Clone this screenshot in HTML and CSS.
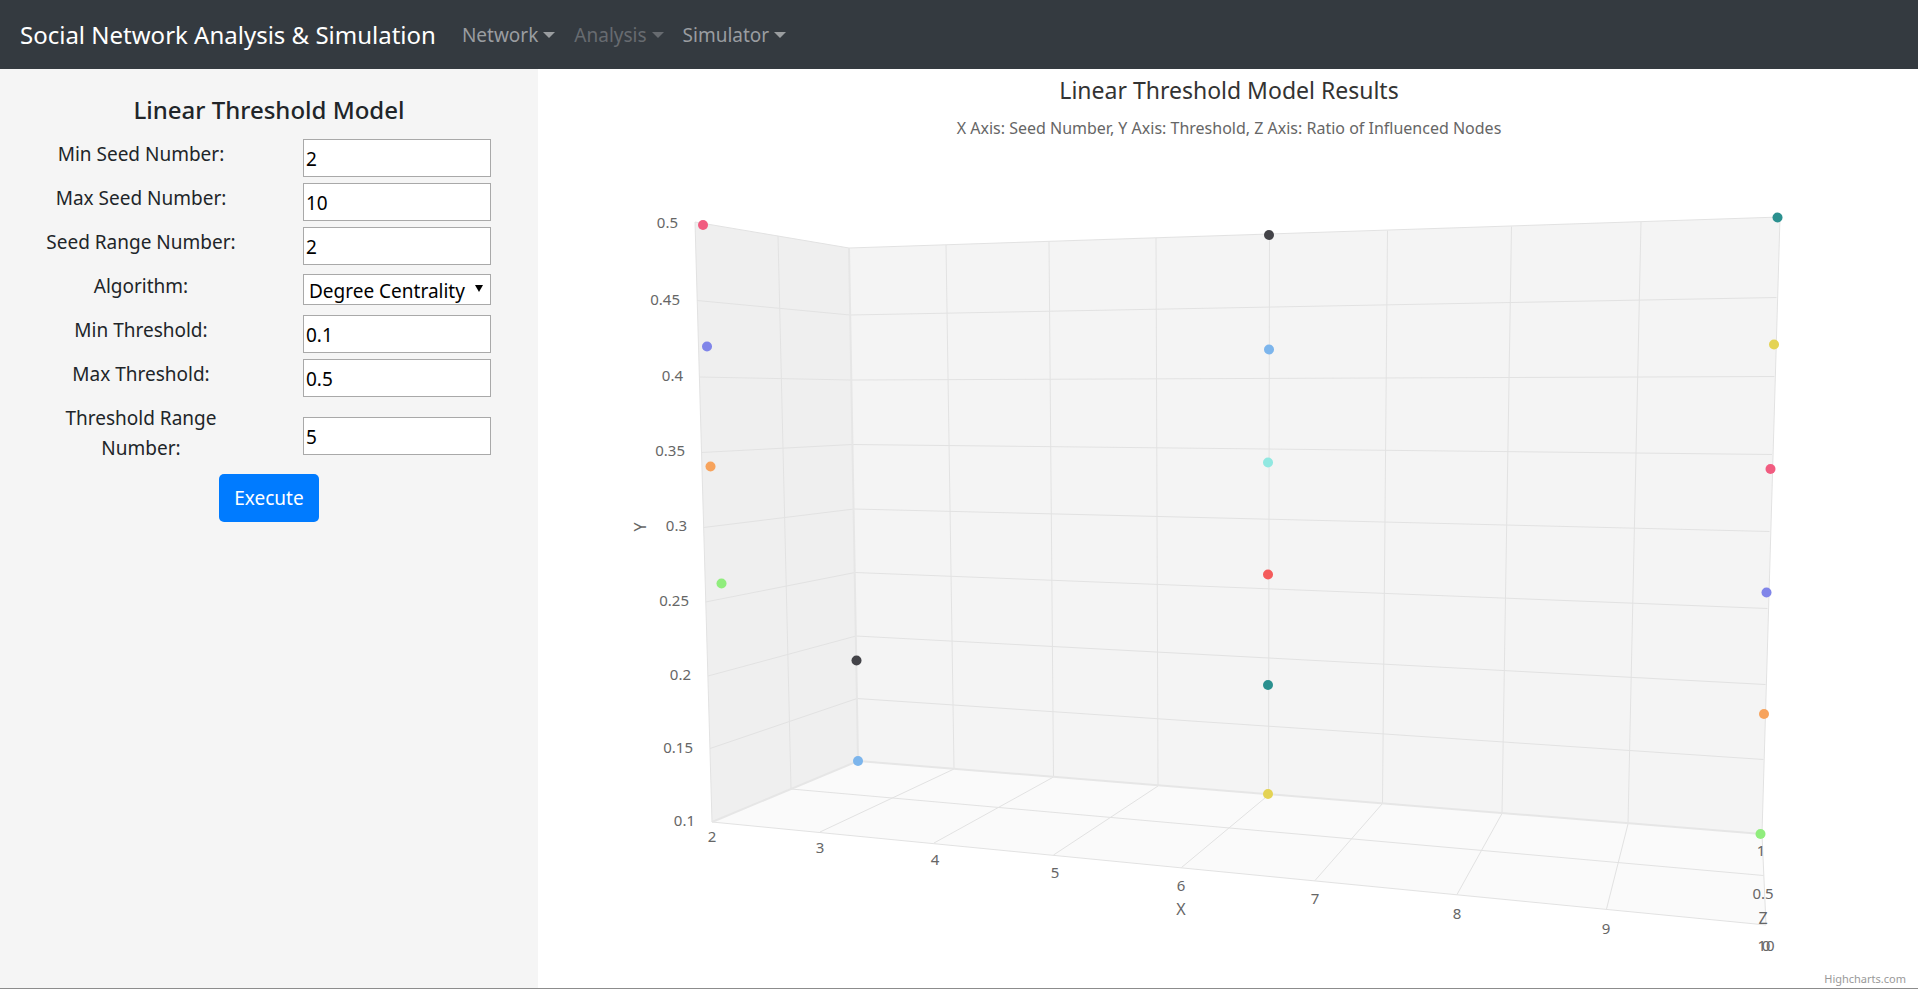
FILE: index.html
```html
<!DOCTYPE html>
<html lang="en">
<head>
<meta charset="utf-8">
<title>Social Network Analysis &amp; Simulation</title>
<link rel="stylesheet" href="styles.css">
</head>
<body>
<nav class="navbar">
  <a class="brand" href="#">Social Network Analysis &amp; Simulation</a>
  <a class="nav-link" href="#">Network</a>
  <a class="nav-link disabled" href="#" aria-disabled="true">Analysis</a>
  <a class="nav-link" href="#">Simulator</a>
</nav>
<main class="layout">
  <aside class="sidebar">
    <h1 class="form-title">Linear Threshold Model</h1>
    <form class="form">
      <div class="row"><label for="min-seed">Min Seed Number:</label><input id="min-seed" type="text" value="2"></div>
      <div class="row"><label for="max-seed">Max Seed Number:</label><input id="max-seed" type="text" value="10"></div>
      <div class="row"><label for="seed-range">Seed Range Number:</label><input id="seed-range" type="text" value="2"></div>
      <div class="row"><label for="algorithm">Algorithm:</label><span class="select-wrap"><select id="algorithm"><option>Degree Centrality</option></select></span></div>
      <div class="row"><label for="min-threshold">Min Threshold:</label><input id="min-threshold" type="text" value="0.1"></div>
      <div class="row"><label for="max-threshold">Max Threshold:</label><input id="max-threshold" type="text" value="0.5"></div>
      <div class="row row-tall"><label for="threshold-range">Threshold Range Number:</label><input id="threshold-range" type="text" value="5"></div>
      <button class="execute" type="button">Execute</button>
    </form>
  </aside>
  <section class="chart">
    <svg class="plot" viewBox="538 69 1380 919" role="img" aria-label="Linear Threshold Model Results">
      <path class="wall-side" d="M695 222L849 248L858 761L712 822Z"/>
      <path class="wall-back" d="M849 248L1780 217L1762 834L858 761Z"/>
      <path class="floor" d="M858 761L1762 834L1766 925L712 822Z"/>
      <g class="grid">
        <path d="M695 222L849 248L1780 217M697 300.500L850 315L1776.500 297.500M699.500 377L851 380L1774.500 376.500M701.500 452.500L852 444.500L1772 454.500M703.500 527.500L854 509L1769.500 531.500M705.500 602L855 572.500L1767.500 608.500M708 676L856 636L1765.500 684.500M710 748.500L857 698.500L1763.500 759.500"/>
        <path d="M695 222L712 822M778 236L791 789L1763.500 875.500M946 245L954 769L820 832M1049 241.500L1053.500 777L934 843M1156 238L1158 786L1053.500 855M1269.500 234L1268.500 795L1181.500 867.500M1387.500 230.500L1382.500 803.500L1315 880.500M1511.500 226.500L1502 813.500L1457 894.500M1641 222L1628 824L1606.500 909M1780 217L1762 834L1766 925"/>
        <path d="M712 822L1766 925"/>
        <path class="edge" d="M849 248L858 761M712 822L858 761L1762 834"/>
      </g>
      <g class="points">
        <circle cx="703" cy="225" r="5" fill="#f15c80"/><circle cx="707" cy="346.500" r="5" fill="#8085e9"/>
        <circle cx="710.500" cy="466.500" r="5" fill="#f7a35c"/><circle cx="721.500" cy="583.500" r="5" fill="#90ed7d"/>
        <circle cx="856.500" cy="660.500" r="5" fill="#434348"/><circle cx="858" cy="761" r="5" fill="#7cb5ec"/>
        <circle cx="1269" cy="235" r="5" fill="#434348"/><circle cx="1269" cy="349.500" r="5" fill="#7cb5ec"/>
        <circle cx="1268" cy="462.500" r="5" fill="#91e8e1"/><circle cx="1268" cy="574.500" r="5" fill="#f45b5b"/>
        <circle cx="1268" cy="685" r="5" fill="#2b908f"/><circle cx="1268" cy="794" r="5" fill="#e4d354"/>
        <circle cx="1777.500" cy="217.500" r="5" fill="#2b908f"/><circle cx="1774" cy="344.500" r="5" fill="#e4d354"/>
        <circle cx="1770.500" cy="469" r="5" fill="#f15c80"/><circle cx="1766.500" cy="592.500" r="5" fill="#8085e9"/>
        <circle cx="1764" cy="714" r="5" fill="#f7a35c"/><circle cx="1760.500" cy="834" r="5" fill="#90ed7d"/>
      </g>
      <text class="title" x="1229" y="99">Linear Threshold Model Results</text>
      <text class="subtitle" x="1229" y="134">X Axis: Seed Number, Y Axis: Threshold, Z Axis: Ratio of Influenced Nodes</text>
      <g class="ticks ticks-y">
        <text x="678" y="228">0.5</text><text x="680" y="305">0.45</text><text x="683" y="381">0.4</text>
        <text x="685" y="456">0.35</text><text x="687" y="531">0.3</text><text x="689" y="606">0.25</text>
        <text x="691" y="680">0.2</text><text x="693" y="753">0.15</text><text x="695" y="826">0.1</text>
      </g>
      <g class="ticks">
        <text x="712" y="842">2</text><text x="820" y="853">3</text><text x="935" y="865">4</text>
        <text x="1055" y="878">5</text><text x="1181" y="891">6</text><text x="1315" y="904">7</text>
        <text x="1457" y="919">8</text><text x="1606" y="934">9</text><text x="1766" y="951">10</text>
        <text x="1761" y="856">1</text><text x="1763" y="899">0.5</text><text x="1766" y="951">0</text>
        <text class="axis-title" x="1181" y="915">X</text><text class="axis-title" x="1763" y="924">Z</text>
        <text class="axis-title" transform="translate(646 527) rotate(-90)">Y</text>
      </g>
    </svg>
    <a class="credits" href="#">Highcharts.com</a>
  </section>
</main>
</body>
</html>
```
FILE: styles.css
```css
* { box-sizing: border-box; }
body {
  margin: 0;
  min-height: 100vh;
  display: flex;
  flex-direction: column;
  font-family: "Noto Sans", sans-serif;
  font-size: 19px;
  line-height: 30px;
  color: #212529;
  background: #fff;
}
.navbar {
  display: flex;
  align-items: center;
  gap: 19px;
  height: 69px;
  padding: 0 20px;
  background: #343a40;
}
.brand {
  margin-right: 7px;
  font-size: 24px;
  color: #fff;
  text-decoration: none;
}
.nav-link {
  display: flex;
  align-items: center;
  gap: 5px;
  color: #9a9da0;
  text-decoration: none;
}
.nav-link::after {
  content: "";
  border: 6px solid transparent;
  border-top-color: currentColor;
  border-bottom: 0;
}
.nav-link.disabled { color: #676b70; }
.layout {
  flex: 1;
  display: flex;
  border-bottom: 1px solid #8c8c8c;
}
.sidebar {
  flex: 0 0 28.05%;
  padding: 23px 13px;
  background: #f5f5f5;
}
.form-title {
  margin: 0 0 12px;
  font-size: 24px;
  line-height: 35px;
  font-weight: 500;
  text-align: center;
}
.form {
  display: flex;
  flex-direction: column;
}
.row {
  display: grid;
  grid-template-columns: 1fr 1fr;
  align-items: end;
  min-height: 44px;
}
.row label {
  align-self: start;
  padding: 0 22px;
  text-align: center;
}
.row input, .select-wrap { margin: 0 34px 6px; }
.row input {
  min-width: 0;
  height: 38px;
  padding: 2px 2px 0;
  border: 1px solid #a9a9a9;
  background: #fff;
  font: inherit;
  color: #000;
}
.row .select-wrap { margin-bottom: 10px; }
.row-tall input { margin-bottom: 8px; }
.select-wrap {
  position: relative;
  display: block;
  height: 31px;
}
.select-wrap::after {
  content: "";
  position: absolute;
  right: 8px;
  top: 11px;
  border: 4px solid transparent;
  border-top: 7px solid #000;
  border-bottom: 0;
  pointer-events: none;
}
.select-wrap select {
  appearance: none;
  display: block;
  width: 100%;
  height: 31px;
  padding: 2px 0 0 5px;
  border: 1px solid #a9a9a9;
  border-radius: 0;
  background: #fff;
  font: inherit;
  line-height: 26px;
  color: #000;
}
.execute {
  align-self: center;
  margin-top: 11px;
  height: 48px;
  padding: 0 15px;
  border: 0;
  border-radius: 5px;
  background: #007bff;
  color: #fff;
  font: inherit;
}
.chart {
  position: relative;
  flex: 1;
  min-width: 0;
}
.plot {
  display: block;
  width: 100%;
  height: auto;
  font-family: "Noto Sans", sans-serif;
}
.wall-side { fill: #efefef; }
.wall-back { fill: #f4f4f4; }
.floor { fill: #fafafa; }
.grid path {
  fill: none;
  stroke: #e2e2e2;
  stroke-width: 1px;
}
.grid .edge {
  stroke: #e6e6e6;
  stroke-width: 2px;
}
.title, .subtitle, .ticks { text-anchor: middle; }
.title { font-size: 23px; fill: #333; }
.subtitle { font-size: 16px; fill: #666; }
.ticks { font-size: 15px; fill: #666; }
.axis-title { font-size: 16px; }
.ticks-y { text-anchor: end; }
.credits {
  position: absolute;
  right: 12px;
  bottom: 2px;
  font-size: 11px;
  line-height: 15px;
  color: #999;
  text-decoration: none;
}
```
